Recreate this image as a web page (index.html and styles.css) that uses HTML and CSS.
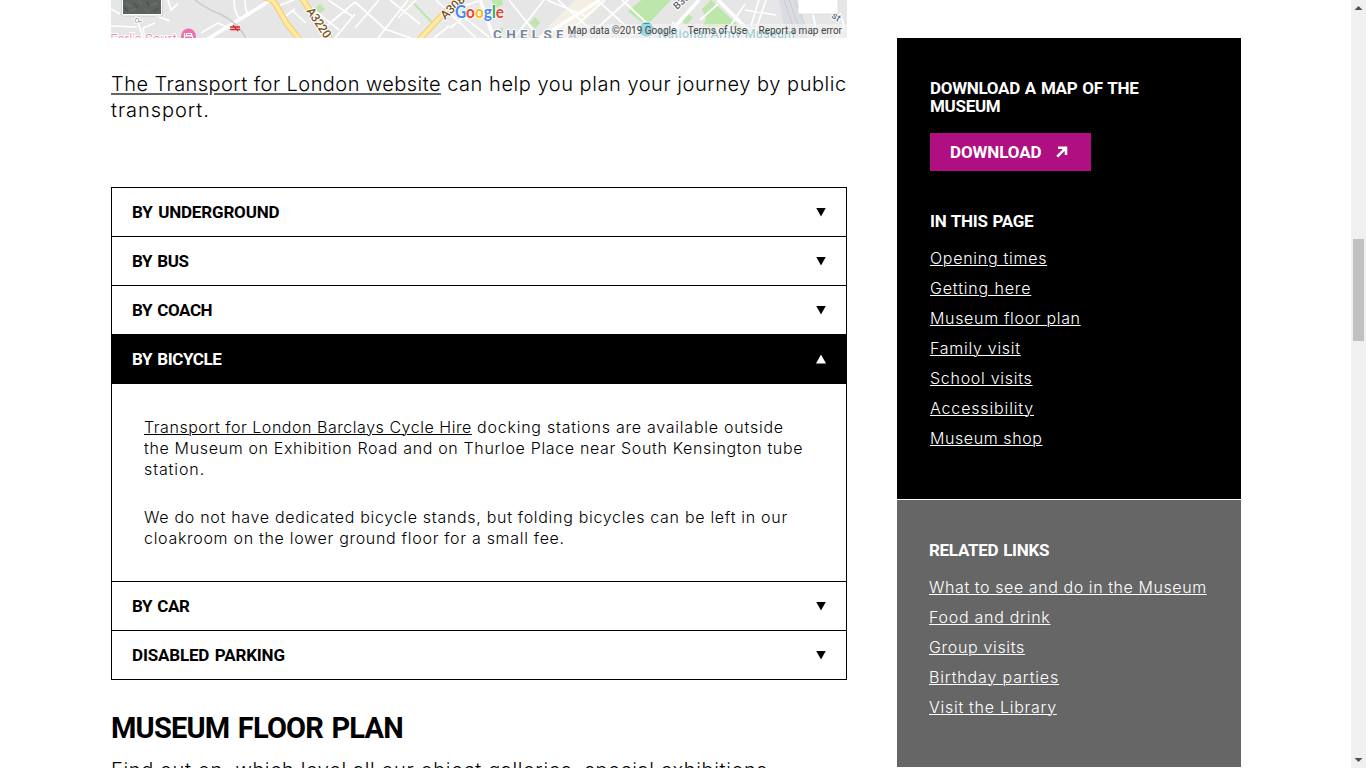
FILE: index.html
```html
<!DOCTYPE html>
<html lang="en">
<head>
<meta charset="utf-8">
<title>Getting here</title>
<link rel="stylesheet" href="styles.css">
</head>
<body>
<div class="page">
  <main class="main">
    <div class="map">
      <svg class="map-art" width="736" height="38" viewBox="111 0 736 38">
        <rect x="111" width="736" height="38" fill="#e6e6e6"/>
        <path d="M400 0h90l20 38H400z" fill="#e9e9e9"/>
        <path d="M575 0l30 0-38 38h-30z" fill="#f3efe3"/>
        <g fill="#bde6ab">
          <path d="M628 11l16-13h29l-23 24-10-1z"/>
          <path d="M680 19l6-7 7 6-7 7zM702 9l9-9 29 27h-38l4-8z"/>
          <path d="M491-1h11l1 6-8 3zM535 17l5 6-5 5-5-5zM314 9l6-5 5 5-6 5zM413 1l21 22-4-1-17-18zM497 30l6-3v6z"/>
        </g>
        <path d="M779 0h17l12 38h-22z" fill="#d9dce0"/>
        <g fill="none" stroke="#fff">
          <path stroke-width="3.500" d="M206 40l65-40M480 0l14 38M540 38l60-38M665 38l34-38M718 0l30 30"/>
          <path stroke-width="1.700" d="M111 9l9 5M135 16l13-3 22 8M136 16l7 22M111 26l26 1M145 38l-2-10 12-5M168 0l3 10 7-6M201 33l17-10 13 6M234 0q0 14 7 20M245 0q0 12 5 16M280 5l14-5M292 10l14 13M283 18l12-9M328 0l24 16M322 30l33-28M312 8l27 22M335 38l20-24M355 28l24-28M378 38l30-38M355 2l30 27 26 9M390 0l30 24M398 18l18-18M436 0l40 38M450 28l14-11 25 20M434 38l15-12M461 7l20-7M509 0l24 30M514 38l30-38M547 0l38 16M558 0l31 28M570 31l35-31M594 31l34-31M597 0l38 34M622 0l25 23-18 15M672 22l16 16M700 20l18-16M722 38l23-34M745 10l31 5M751 26l8-26M766 0l-13 38M812 10l6 28M840 13l4 13-8 12"/>
        </g>
        <g fill="none" stroke="#c9cbd0">
          <path stroke-width="1.500" d="M195 0q12 9 25 14 20 10 26 25"/>
          <path d="M784 0l13 38M789 0l14 38M795 0l12 30"/>
        </g>
        <g fill="none">
          <path stroke="#f4cd68" stroke-width="6" d="M262-3q10 1 14 8l11 19 13 16M301-3l22 33 10 12M417 42l45-48"/>
          <path stroke="#ffe9a3" stroke-width="4" d="M262-3q10 1 14 8l11 19 13 16M301-3l22 33 10 12M417 42l45-48"/>
        </g>
        <path d="M230 27h10M230 29.500h10M233 25l5 6" stroke="#e0242b" stroke-width="1.300"/>
        <g font-family="Roboto, sans-serif" stroke-width="2" paint-order="stroke" stroke="#fff">
          <text x="110.500" y="43" font-size="12" textLength="66" fill="#ee6fae">Earl's Court</text>
          <text transform="translate(306 11) rotate(56)" font-size="12" font-weight="500" fill="#735126" textLength="34">A3220</text>
          <text transform="translate(445 20) rotate(-43)" font-size="12" font-weight="500" fill="#735126">A308</text>
          <text transform="translate(677 10) rotate(-42)" font-size="10" font-weight="500" fill="#5d636b">B304</text>
          <text transform="translate(142 22) rotate(-105)" font-size="9" fill="#666">P</text>
          <text transform="translate(831 17) rotate(35)" font-size="10" font-weight="500" fill="#5d6b80">st</text>
          <text x="493" y="39" font-size="13.500" font-weight="700" fill="#7588a0" textLength="84">CHELSEA</text>
          <text x="658" y="38" font-size="12.500" font-weight="500" fill="#2f95a8" textLength="137">National Army Museum</text>
        </g>
        <circle cx="188.500" cy="36" r="7.500" fill="#ee6fae"/>
        <path d="M184.500 33v6M192.500 39v-3h-8M186.500 33.500h5v2h-5z" stroke="#fff" fill="none" stroke-width="1.200"/>
        <circle cx="646.500" cy="29.500" r="7" fill="#18a9bc"/>
        <g>
          <rect x="121.500" y="-12" width="41" height="28" rx="2" fill="#fff" stroke="#bbb" stroke-width=".6"/>
          <rect x="123" y="-12" width="38" height="26" fill="#5c625d"/>
          <path d="M126 3l6 4M138 1l5 3M150 6l7-3M129 11l8-2M144 9l5 3" stroke="#686e67" stroke-width="2"/>
          <path d="M134 3l4 6M147 1l2 5M154 11l5-3M124 7l4 4" stroke="#505651" stroke-width="2"/>
          <rect x="798" y="-10" width="40" height="24" rx="2" fill="#fff" stroke="#ccc" stroke-width=".5"/>
        </g>
        <text x="455" y="17.500" font-family="Lato, sans-serif" font-size="16.500" font-weight="700" textLength="49" lengthAdjust="spacingAndGlyphs" stroke="#fff" stroke-width="1.500" paint-order="stroke"><tspan fill="#4285f4">G</tspan><tspan fill="#ea4335">o</tspan><tspan fill="#fbbc05">o</tspan><tspan fill="#4285f4">g</tspan><tspan fill="#34a853">l</tspan><tspan fill="#ea4335">e</tspan></text>
      </svg>
      <div class="map-credit"><span>Map data ©2019 Google</span><span>Terms of Use</span><span>Report a map error</span></div>
    </div>

    <p class="intro"><a class="intro-link">The Transport for London website</a><span class="intro-rest"> can help you plan your journey by public</span><br><span class="intro-end">transport.</span></p>

    <div class="accordion">
      <div class="row"><span>BY UNDERGROUND</span><i class="arrow"></i></div>
      <div class="row"><span class="tight">BY BUS</span><i class="arrow"></i></div>
      <div class="row"><span class="tight">BY COACH</span><i class="arrow"></i></div>
      <div class="row open"><span class="tight">BY BICYCLE</span><i class="arrow up"></i></div>
      <div class="panel">
        <p><a class="cycle-link">Transport for London Barclays Cycle Hire</a><span class="cycle-rest"> docking stations are available outside</span><br><span class="cycle-mid">the Museum on Exhibition Road and on Thurloe Place near South Kensington tube</span><br><span class="cycle-end">station.</span></p>
        <p>We do not have dedicated bicycle stands, but folding bicycles can be left in our<br>cloakroom on the lower ground floor for a small fee.</p>
      </div>
      <div class="row"><span class="tight">BY CAR</span><i class="arrow"></i></div>
      <div class="row"><span>DISABLED PARKING</span><i class="arrow"></i></div>
    </div>

    <h2 class="title">MUSEUM FLOOR PLAN</h2>
    <p class="lead">Find out on, which level all our object galleries, special exhibitions</p>
  </main>

  <aside class="side">
    <section class="box dark">
      <h3>DOWNLOAD A MAP OF THE<br>MUSEUM</h3>
      <a class="button">DOWNLOAD<svg width="12" height="12" viewBox="0 0 12 12"><path d="M2 1.800H10V9M9.800 2L1.200 10.600" fill="none" stroke="#fff" stroke-width="2.500"/></svg></a>
      <h3 class="second">IN THIS PAGE</h3>
      <ul class="links">
        <li><a>Opening times</a></li>
        <li><a class="ls-3">Getting here</a></li>
        <li><a class="ls-2">Museum floor plan</a></li>
        <li><a>Family visit</a></li>
        <li><a>School visits</a></li>
        <li><a class="ls-3">Accessibility</a></li>
        <li><a class="ls-1">Museum shop</a></li>
      </ul>
    </section>
    <section class="box grey">
      <h3>RELATED LINKS</h3>
      <ul class="links">
        <li><a class="ls-1">What to see and do in the Museum</a></li>
        <li><a>Food and drink</a></li>
        <li><a class="ls-2">Group visits</a></li>
        <li><a class="ls-3">Birthday parties</a></li>
        <li><a>Visit the Library</a></li>
      </ul>
    </section>
  </aside>

  <div class="scrollbar">
    <svg width="15" height="17" viewBox="0 0 15 17"><path d="M3.500 10h8l-4-4z" fill="#505050"/></svg>
    <div class="thumb"></div>
    <svg class="down" width="15" height="17" viewBox="0 0 15 17"><path d="M3.500 7h8l-4 4z" fill="#505050"/></svg>
  </div>
</div>
</body>
</html>
```
FILE: styles.css
```css
* { box-sizing: border-box; margin: 0; padding: 0; }
html, body { height: 768px; overflow: hidden; background: #fff; }
body { font: 300 16px/21px Inter, sans-serif; color: #000; }

.page { display: flex; height: 768px; overflow: hidden; padding-left: 111px; }
.main { width: 736px; flex: none; white-space: nowrap; }

.map { position: relative; height: 38px; }
.map-art { display: block; }
.map-credit {
  position: absolute; right: 0; bottom: 0; height: 14px;
  display: flex; gap: 11.500px; padding: 0 5px 0 4px;
  font: 400 10px/14px Roboto, sans-serif; color: #444;
  background: rgba(245, 245, 245, .6);
}

.intro { padding-top: 33px; font-size: 20px; line-height: 26px; }
.intro-link { letter-spacing: .444px; text-decoration: underline #666 2px; text-underline-offset: 2px; }
.intro-rest { letter-spacing: .54px; }
.intro-end { letter-spacing: .95px; }

.accordion { margin-top: 64px; border: 1px solid #000; border-top: 0; }
.row {
  display: flex; justify-content: space-between; align-items: center;
  height: 49px; padding: 0 20px 1px; border-top: 1px solid #000;
  font: 700 17px/20px Roboto, sans-serif; letter-spacing: -.17px; word-spacing: 1.500px;
}
.tight { letter-spacing: -.45px; }
.open { height: 50px; padding-bottom: 2px; background: #000; color: #fff; }
.arrow { width: 10px; height: 9px; background: currentColor; clip-path: polygon(0 0, 100% 0, 50% 100%); margin-top: 1px; }
.arrow.up { clip-path: polygon(0 100%, 100% 100%, 50% 0); }

.panel { height: 197px; padding: 33px 32px 0; letter-spacing: .7px; }
.panel p + p { margin-top: 27px; }
.cycle-link { letter-spacing: .54px; text-decoration: underline 1px; text-underline-offset: 1px; }
.cycle-rest { letter-spacing: .76px; }
.cycle-mid { letter-spacing: .655px; }
.cycle-end { letter-spacing: .9px; }

.title { margin-top: 31px; font: 700 29px/34px Roboto, sans-serif; letter-spacing: -.8px; word-spacing: 2px; }
.lead { margin-top: 12px; font-size: 20px; line-height: 26px; letter-spacing: .65px; }

.side { width: 344px; margin: 38px 0 0 50px; flex: none; color: #fff; white-space: nowrap; }
.box h3 { font: 700 17px/18px Roboto, sans-serif; letter-spacing: -.3px; word-spacing: 1px; }
.dark { height: 461px; background: #000; padding: 41px 33px 0; }
.grey { height: 267px; margin-top: 1px; background: #666; padding: 41px 32px 0; }
.button {
  display: flex; align-items: center; gap: 14px; width: 161px; height: 38px;
  margin-top: 18px; padding-left: 20px; background: #af0f80;
  font: 700 17px/20px Roboto, sans-serif; letter-spacing: -.1px;
}
.box .second { margin-top: 41px; }
.links { list-style: none; margin-top: 13px; }
.links li { height: 30px; line-height: 30px; letter-spacing: .72px; }
.links a { text-decoration: underline 1px; text-underline-offset: 1px; }
.links .ls-1 { letter-spacing: .58px; }
.links .ls-2 { letter-spacing: .67px; }
.links .ls-3 { letter-spacing: .85px; }

.scrollbar { display: flex; flex-direction: column; width: 15px; height: 768px; margin-left: auto; background: #f0f0f0; }
.scrollbar svg { display: block; }
.thumb { width: 11px; height: 102px; margin: 222px 2px 0; background: #c1c1c1; }
.down { margin-top: auto; }
```
